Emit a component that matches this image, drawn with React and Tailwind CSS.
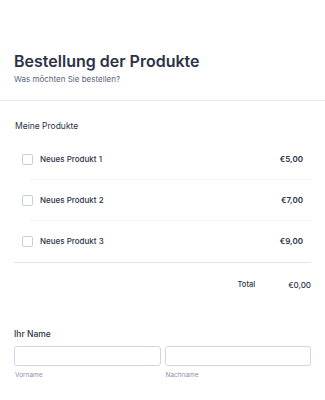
const products = [
  { name: "Neues Produkt 1", price: "€5,00" },
  { name: "Neues Produkt 2", price: "€7,00" },
  { name: "Neues Produkt 3", price: "€9,00" },
];

export default function App() {
  return (
    <div className="w-[325px] h-[400px] overflow-hidden bg-white text-[#2c3345]" style={{ fontFamily: "Inter, 'Noto Sans', sans-serif" }}>
      <header className="pt-[50px] px-[14px] pb-[15px] border-b border-[#eaebf2]">
        <h1 className="text-[16px] leading-[22px] font-semibold">Bestellung der Produkte</h1>
        <p className="mt-[2px] text-[8px] leading-[11px] text-[#57647e]">Was möchten Sie bestellen?</p>
      </header>

      <section className="pt-[19px] px-[14px]">
        <div className="pl-[1px] text-[8.5px] leading-[12px]">Meine Produkte</div>
        <ul className="mt-[7px]">
          {products.map((p, i) => (
            <li key={p.name} className="flex flex-col">
              <div className="flex items-center h-[40px] pl-[8px] pr-[8px]">
                <span className="w-[11px] h-[11px] rounded-[2px] border border-[#c9cedb] mr-[7px]"></span>
                <span className="flex-1 text-[8px] font-medium">{p.name}</span>
                <span className="text-[8px] font-semibold">{p.price}</span>
              </div>
              {i < products.length - 1 && (
                <div className="ml-[17px] border-b border-dotted border-[#eceef3]"></div>
              )}
            </li>
          ))}
        </ul>
        <div className="mt-[1px] border-b border-[#e3e5ee]"></div>
        <div className="flex justify-end items-center h-[44px] text-[7.5px]">
          <span className="mr-[33px] font-medium">Total</span>
          <span className="text-[8px] font-medium">€0,00</span>
        </div>
      </section>

      <section className="pt-[21px] px-[14px]">
        <label className="block text-[8.5px] leading-[12px] font-medium">Ihr Name</label>
        <div className="mt-[4px] grid grid-cols-2 gap-[4px]">
          <div>
            <input className="w-full h-[20px] rounded-[3px] border border-[#d3d6e2] bg-white outline-none" />
            <div className="mt-[3px] pl-[1px] text-[6.5px] leading-[8px] text-[#8d8fa8]">Vorname</div>
          </div>
          <div>
            <input className="w-full h-[20px] rounded-[3px] border border-[#d3d6e2] bg-white outline-none" />
            <div className="mt-[3px] pl-[1px] text-[6.5px] leading-[8px] text-[#8d8fa8]">Nachname</div>
          </div>
        </div>
      </section>
    </div>
  );
}
